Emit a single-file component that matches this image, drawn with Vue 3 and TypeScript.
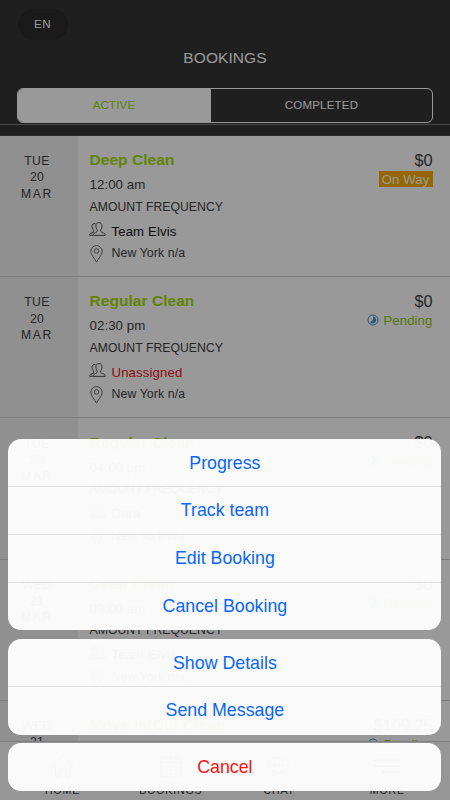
<script setup lang="ts">
import { ref } from 'vue'

interface Booking {
  weekday: string
  day: string
  month: string
  title: string
  time: string
  team: string
  unassigned?: boolean
  price: string
  status: 'On Way' | 'Pending'
}

const bookings: Booking[] = [
  { weekday: 'TUE', day: '20', month: 'MAR', title: 'Deep Clean', time: '12:00 am', team: 'Team Elvis', price: '$0', status: 'On Way' },
  { weekday: 'TUE', day: '20', month: 'MAR', title: 'Regular Clean', time: '02:30 pm', team: 'Unassigned', unassigned: true, price: '$0', status: 'Pending' },
  { weekday: 'TUE', day: '20', month: 'MAR', title: 'Regular Clean', time: '04:00 pm', team: 'Dara', price: '$0', status: 'Pending' },
  { weekday: 'WED', day: '21', month: 'MAR', title: 'Deep Clean', time: '09:00 am', team: 'Team Elvis', price: '$0', status: 'Pending' },
  { weekday: 'WED', day: '21', month: 'MAR', title: 'Move In/Out Clean', time: '10:00 am', team: 'Team Elvis', price: '$109.25', status: 'Pending' },
]

const tabs = ['HOME', 'BOOKINGS', 'CHAT', 'MORE']
const groups = [
  ['Progress', 'Track team', 'Edit Booking', 'Cancel Booking'],
  ['Show Details', 'Send Message'],
]
const active = ref<'ACTIVE' | 'COMPLETED'>('ACTIVE')
</script>

<template>
  <div class="screen">
    <header class="header">
      <button class="lang">EN</button>
      <h1>BOOKINGS</h1>
      <div class="segments">
        <button :class="{ on: active === 'ACTIVE' }" @click="active = 'ACTIVE'">ACTIVE</button>
        <button :class="{ on: active === 'COMPLETED' }" @click="active = 'COMPLETED'">COMPLETED</button>
      </div>
      <div class="rule"></div>
    </header>

    <main class="list">
      <article v-for="(b, i) in bookings" :key="i" class="row">
        <div class="date">
          <span>{{ b.weekday }}</span>
          <span>{{ b.day }}</span>
          <span class="month">{{ b.month }}</span>
        </div>
        <div class="info">
          <h2>{{ b.title }}</h2>
          <p class="time">{{ b.time }}</p>
          <p class="freq">AMOUNT FREQUENCY</p>
          <p class="team" :class="{ red: b.unassigned }">
            <svg class="people" viewBox="0 0 17 15">
              <path d="M4.800 10 1.500 11.500Q.6 12 .6 13.300H4M6.600 1.800C4.300 1 2.800 2.300 3 4.500 3.200 6.500 4.400 7.300 4.500 8.400 4.600 9.500 3.700 10.300 2.900 10.800" />
              <path d="M4.400 13.400H16.200C16.200 11.600 15.500 11.300 13.400 10.400 11.800 9.700 11.400 9.300 11.700 8.200 12 7.100 13.100 6 13 3.800 12.900 1.800 11.800.6 9.900.6S6.900 1.800 6.900 3.800C6.900 6 7.900 7.100 8.200 8.200 8.500 9.300 8 9.800 6.500 10.500 4.900 11.200 4.300 11.700 4.400 13.400Z" />
            </svg>
            <span>{{ b.team }}</span>
          </p>
          <p class="place">
            <svg class="pin" viewBox="0 0 13 18">
              <path d="M6.500 17.200C5.200 14.100.8 10 .8 6.300A5.700 5.700 0 0 1 12.200 6.300C12.200 10 7.800 14.100 6.500 17.200Z" />
              <circle cx="6.500" cy="6" r="2.300" />
            </svg>
            <span>New York n/a</span>
          </p>
        </div>
        <div class="side">
          <span class="price">{{ b.price }}</span>
          <span v-if="b.status === 'On Way'" class="onway">On Way</span>
          <span v-else class="pending">
            <svg viewBox="0 0 12 12">
              <circle cx="6" cy="6" r="5" />
              <path d="M6.200 2.600A3.400 3.400 0 1 1 3.200 8.200Q6.400 7 6.200 2.600Z" />
            </svg>
            Pending
          </span>
        </div>
      </article>
    </main>

    <nav class="tabbar">
      <div v-for="t in tabs" :key="t" class="tab">
        <svg viewBox="0 0 26 26">
          <path v-if="t === 'HOME'" d="M2 13 13 2 24 13H20.500V24H16V16H10V24H5.500V13Z" />
          <g v-else-if="t === 'BOOKINGS'">
            <path d="M3 5H23V24H3ZM3 9.500H23M8 2.500V7M13 2.500V7M18 2.500V7" />
            <path d="M7 13.500H19M7 17H19M7 20.500H19" stroke-dasharray="2 3" />
          </g>
          <g v-else-if="t === 'CHAT'">
            <path d="M8 18.500C5 17.500 3 15 3 12 3 7.500 7 4.500 13 4.500S23 7.500 23 12 19 19.500 13 19.500L7.500 22.500Z" />
            <path d="M8 12H18" stroke-dasharray="2 2" stroke-width="2" />
          </g>
          <path v-else d="M0 7.500H26M0 13H26M8 19H26" stroke-width="2" />
        </svg>
        <span>{{ t }}</span>
      </div>
    </nav>

    <div class="overlay">
      <div v-for="(g, i) in groups" :key="i" class="group">
        <button v-for="a in g" :key="a">{{ a }}</button>
      </div>
      <div class="group">
        <button class="cancel">Cancel</button>
      </div>
    </div>
  </div>
</template>

<style>
body {
  margin: 0;
}
</style>

<style scoped>
.screen {
  position: relative;
  display: flex;
  flex-direction: column;
  width: 450px;
  height: 800px;
  overflow: hidden;
  background: #fff;
  color: #404040;
  font-family: "Liberation Sans", Arial, sans-serif;
}
h1, h2, p {
  margin: 0;
  font-weight: normal;
}
button {
  padding: 0;
  border: 0;
  background: none;
  font-family: inherit;
}
svg {
  flex: none;
  fill: none;
  stroke: #555;
}
.header {
  box-sizing: border-box;
  flex: none;
  height: 136px;
  padding-top: 9px;
  background: #353535;
  border-bottom: 1px solid #4c484c;
  color: #fff;
}
.lang {
  display: block;
  width: 50px;
  height: 31px;
  margin-left: 17.500px;
  padding-bottom: 2px;
  border-radius: 16px;
  background: #2c2c2c;
  color: #fff;
  font-size: 11.600px;
  letter-spacing: .5px;
}
h1 {
  height: 20px;
  margin-top: 8px;
  text-align: center;
  font-size: 15.500px;
  line-height: 20px;
  letter-spacing: .08px;
}
.segments {
  box-sizing: border-box;
  display: flex;
  width: 416px;
  height: 35px;
  margin: 20px 0 0 17px;
  border: 1px solid #fff;
  border-radius: 6px;
  overflow: hidden;
}
.segments button {
  flex: 1;
  padding-bottom: 1px;
  color: #fff;
  font-size: 11.500px;
  letter-spacing: .2px;
}
.segments button:first-child {
  flex: 0 0 193px;
  padding-right: 1px;
}
.segments .on {
  background: #fff;
  color: #a3d40a;
}
.rule {
  height: 1px;
  margin-top: 1px;
  background: #777;
}
.list {
  flex: 1;
  min-height: 0;
  overflow: hidden;
}
.row {
  box-sizing: border-box;
  display: flex;
  height: 141.200px;
  border-bottom: 1px solid #d0d0d0;
}
.date {
  box-sizing: border-box;
  display: flex;
  flex-direction: column;
  flex: none;
  width: 78px;
  padding: 17.200px 4px 0 0;
  background: #f1f1f1;
  text-align: center;
  font-size: 12.200px;
  line-height: 16.300px;
  letter-spacing: .3px;
}
.date .month {
  letter-spacing: 1.600px;
}
.info {
  flex: 1;
  padding: 12.300px 0 0 11.500px;
}
h2 {
  color: #a6da0a;
  font-size: 15.500px;
  font-weight: bold;
  line-height: 24px;
  letter-spacing: .05px;
}
.time {
  font-size: 13.300px;
  line-height: 25.500px;
  letter-spacing: .05px;
}
.freq {
  height: 20px;
  font-size: 12.200px;
  line-height: 18.600px;
  letter-spacing: .06px;
  white-space: nowrap;
}
.team {
  display: flex;
  color: #111;
  font-size: 13.200px;
  line-height: 27.400px;
  letter-spacing: .12px;
}
.team.red {
  color: #f0141c;
}
.people {
  width: 17px;
  height: 15px;
  margin: 4px 5.500px 0 -.5px;
}
.place {
  display: flex;
  font-size: 12.300px;
  line-height: 17.900px;
  letter-spacing: .1px;
}
.pin {
  width: 13px;
  height: 18px;
  margin: 0 8.500px 0 .5px;
  stroke-width: .85;
}
.side {
  display: flex;
  flex-direction: column;
  align-items: flex-end;
  padding: 14px 17.500px 0 0;
}
.price {
  font-size: 16.200px;
  line-height: 20px;
}
.onway {
  height: 16.500px;
  margin-top: .7px;
  padding: 0 3px;
  background: #faaa00;
  color: #fff;
  font-size: 13.200px;
  line-height: 17.500px;
  letter-spacing: .1px;
}
.pending {
  display: flex;
  align-items: center;
  gap: 4px;
  color: #98c80d;
  font-size: 13.200px;
  line-height: 20.500px;
  letter-spacing: .1px;
}
.pending svg {
  width: 12px;
  height: 12px;
  margin-bottom: 3px;
  stroke: #4590d4;
}
.pending path {
  fill: #4590d4;
  stroke: none;
}
.tabbar {
  box-sizing: border-box;
  display: flex;
  flex: none;
  height: 59px;
  padding: 11px 8.500px 0;
  border-top: 1px solid #d0d0d0;
  background: #fafafa;
}
.tab {
  display: flex;
  flex: 1;
  flex-direction: column;
  align-items: center;
  color: #333;
  font-size: 10.500px;
  line-height: 12px;
  letter-spacing: .9px;
}
.tab svg {
  width: 26px;
  height: 26px;
  margin-bottom: 5px;
}
.overlay {
  position: absolute;
  inset: 0;
  box-sizing: border-box;
  display: flex;
  flex-direction: column;
  justify-content: flex-end;
  gap: 8.700px;
  padding: 0 8.600px 8.700px 8.400px;
  background: rgba(0, 0, 0, .4);
}
.group {
  overflow: hidden;
  border-radius: 13px;
  background: rgba(253, 253, 253, .97);
}
.group button {
  box-sizing: border-box;
  display: block;
  width: 100%;
  height: 47.830px;
  padding-top: 1px;
  border-bottom: 1px solid #dedede;
  color: #0a66f5;
  font-size: 17.800px;
  line-height: 45px;
}
.group button:last-child {
  border-bottom-color: transparent;
}
.group .cancel {
  color: #f51414;
}
</style>
